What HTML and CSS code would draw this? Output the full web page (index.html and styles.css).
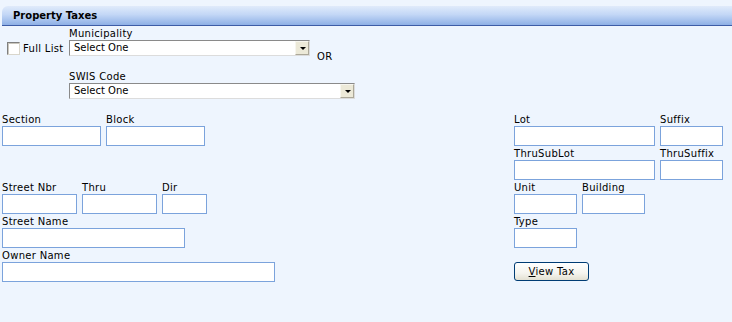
FILE: index.html
```html
<!DOCTYPE html>
<html lang="en">
<head>
    <meta charset="UTF-8">
    <title>Property Taxes</title>
    <link rel="stylesheet" href="styles.css">
</head>
<body>
    <div class="panel-title">Property Taxes</div>
    <form class="search">
        <!-- Municipality / SWIS -->
        <div class="muni-row">
            <label class="full-list"><input type="checkbox"> Full List</label>
            <div class="field">
                <label for="muni">Municipality</label>
                <div class="select-box muni">
                    <select id="muni"><option>Select One</option></select>
                    <span class="arrow"></span>
                </div>
            </div>
            <span class="or">OR</span>
        </div>
        <div class="field swis">
            <label for="swis">SWIS Code</label>
            <div class="select-box swis-box">
                <select id="swis"><option>Select One</option></select>
                <span class="arrow"></span>
            </div>
        </div>

        <!-- Parcel fields -->
        <div class="grid">
            <div class="cell">
                <div class="field"><label for="section">Section</label><input type="text" id="section" class="w99"></div>
                <div class="field"><label for="block">Block</label><input type="text" id="block" class="w99"></div>
            </div>
            <div class="cell">
                <div class="field"><label for="lot">Lot</label><input type="text" id="lot" class="w141"></div>
                <div class="field"><label for="suffix">Suffix</label><input type="text" id="suffix" class="w63"></div>
            </div>

            <div class="cell"></div>
            <div class="cell">
                <div class="field"><label for="thruSubLot">ThruSubLot</label><input type="text" id="thruSubLot" class="w141"></div>
                <div class="field"><label for="thruSuffix">ThruSuffix</label><input type="text" id="thruSuffix" class="w63"></div>
            </div>

            <div class="cell">
                <div class="field"><label for="streetNbr">Street Nbr</label><input type="text" id="streetNbr" class="w75"></div>
                <div class="field"><label for="thru">Thru</label><input type="text" id="thru" class="w75"></div>
                <div class="field"><label for="dir">Dir</label><input type="text" id="dir" class="w45"></div>
            </div>
            <div class="cell">
                <div class="field"><label for="unit">Unit</label><input type="text" id="unit" class="w63"></div>
                <div class="field"><label for="building">Building</label><input type="text" id="building" class="w63"></div>
            </div>

            <div class="cell">
                <div class="field"><label for="streetName">Street Name</label><input type="text" id="streetName" class="w183"></div>
            </div>
            <div class="cell">
                <div class="field"><label for="type">Type</label><input type="text" id="type" class="w63"></div>
            </div>

            <div class="cell">
                <div class="field"><label for="ownerName">Owner Name</label><input type="text" id="ownerName" class="w273"></div>
            </div>
            <div class="cell">
                <button type="submit" class="view-tax"><u>V</u>iew Tax</button>
            </div>
        </div>
    </form>
</body>
</html>
```

FILE: styles.css
```css
body {
    margin: 0;
    background-color: #eef5fe;
    font-family: "DejaVu Sans", Verdana, sans-serif;
    font-size: 10px;
    color: #000;
}
.panel-title {
    margin: 6px 0 0 2px;
    height: 19px;
    line-height: 19px;
    padding-left: 11px;
    font-weight: bold;
    border-bottom: 1px solid #3d5ca6;
    border-top-left-radius: 6px;
    background: linear-gradient(to bottom, #e0ebfb 0%, #c3d7f6 45%, #8eb0e6 100%);
}
.search {
    margin: 0;
}
.field {
    display: flex;
    flex-direction: column;
}
.field label {
    line-height: 12px;
    letter-spacing: 0.3px;
}
.muni-row {
    display: flex;
    align-items: flex-start;
    margin-top: 2px;
}
.full-list {
    display: flex;
    align-items: center;
    gap: 3px;
    width: 62px;
    margin: 14px 0 0 7px;
    height: 13px;
    letter-spacing: 0.3px;
}
.full-list input {
    appearance: none;
    width: 13px;
    height: 13px;
    margin: 0;
    background: #fff;
    border: 1px solid;
    border-color: #7f7f7f #d9d6cc #d9d6cc #7f7f7f;
    box-shadow: inset 1px 1px 0 #c9c6bd;
}
.select-box {
    position: relative;
    height: 16px;
}
.muni {
    width: 241px;
}
.swis-box {
    width: 286px;
}
.select-box select {
    appearance: none;
    width: 100%;
    height: 16px;
    margin: 0;
    padding: 0 0 0 4px;
    border: 1px solid;
    border-color: #8a8a8a #dcdcdc #dcdcdc #8a8a8a;
    background: #fff;
    font-family: "DejaVu Sans", Verdana, sans-serif;
    font-size: 10px;
    line-height: 14px;
    color: #000;
}
.arrow {
    position: absolute;
    top: 1px;
    right: 1px;
    width: 14px;
    height: 14px;
    box-sizing: border-box;
    background: #ece9d8;
    border: 1px solid;
    border-color: #f7f6ef #aca899 #aca899 #f7f6ef;
}
.arrow::after {
    content: "";
    position: absolute;
    left: 4px;
    top: 5px;
    border-left: 3px solid transparent;
    border-right: 3px solid transparent;
    border-top: 3px solid #000;
}
.or {
    margin: 23px 0 0 7px;
    line-height: 12px;
    letter-spacing: 0.3px;
}
.swis {
    margin: 8px 0 0 69px;
}
.grid {
    display: grid;
    grid-template-columns: 512px auto;
    margin-top: 13px;
    padding-left: 2px;
}
.cell {
    display: flex;
    gap: 5px;
    min-height: 34px;
}
.grid .field label {
    height: 14px;
    padding-top: 2px;
    box-sizing: border-box;
    line-height: 12px;
}
.grid input {
    height: 20px;
    margin: 0;
    padding: 0 2px;
    box-sizing: border-box;
    border: 1px solid #7ba3dc;
    background: #fff;
    font-family: "DejaVu Sans", Verdana, sans-serif;
    font-size: 10px;
}
.w45 { width: 45px; }
.w63 { width: 63px; }
.w75 { width: 75px; }
.w99 { width: 99px; }
.w141 { width: 141px; }
.w183 { width: 183px; }
.w273 { width: 273px; }
.view-tax {
    width: 75px;
    height: 19px;
    margin-top: 14px;
    padding: 0;
    border: 1px solid #003c74;
    border-radius: 3px;
    background: linear-gradient(to bottom, #ffffff 0%, #f5f4ee 60%, #e3e0d2 100%);
    font-family: "DejaVu Sans", Verdana, sans-serif;
    font-size: 10px;
    letter-spacing: 0.3px;
    color: #000;
    cursor: pointer;
}
```
